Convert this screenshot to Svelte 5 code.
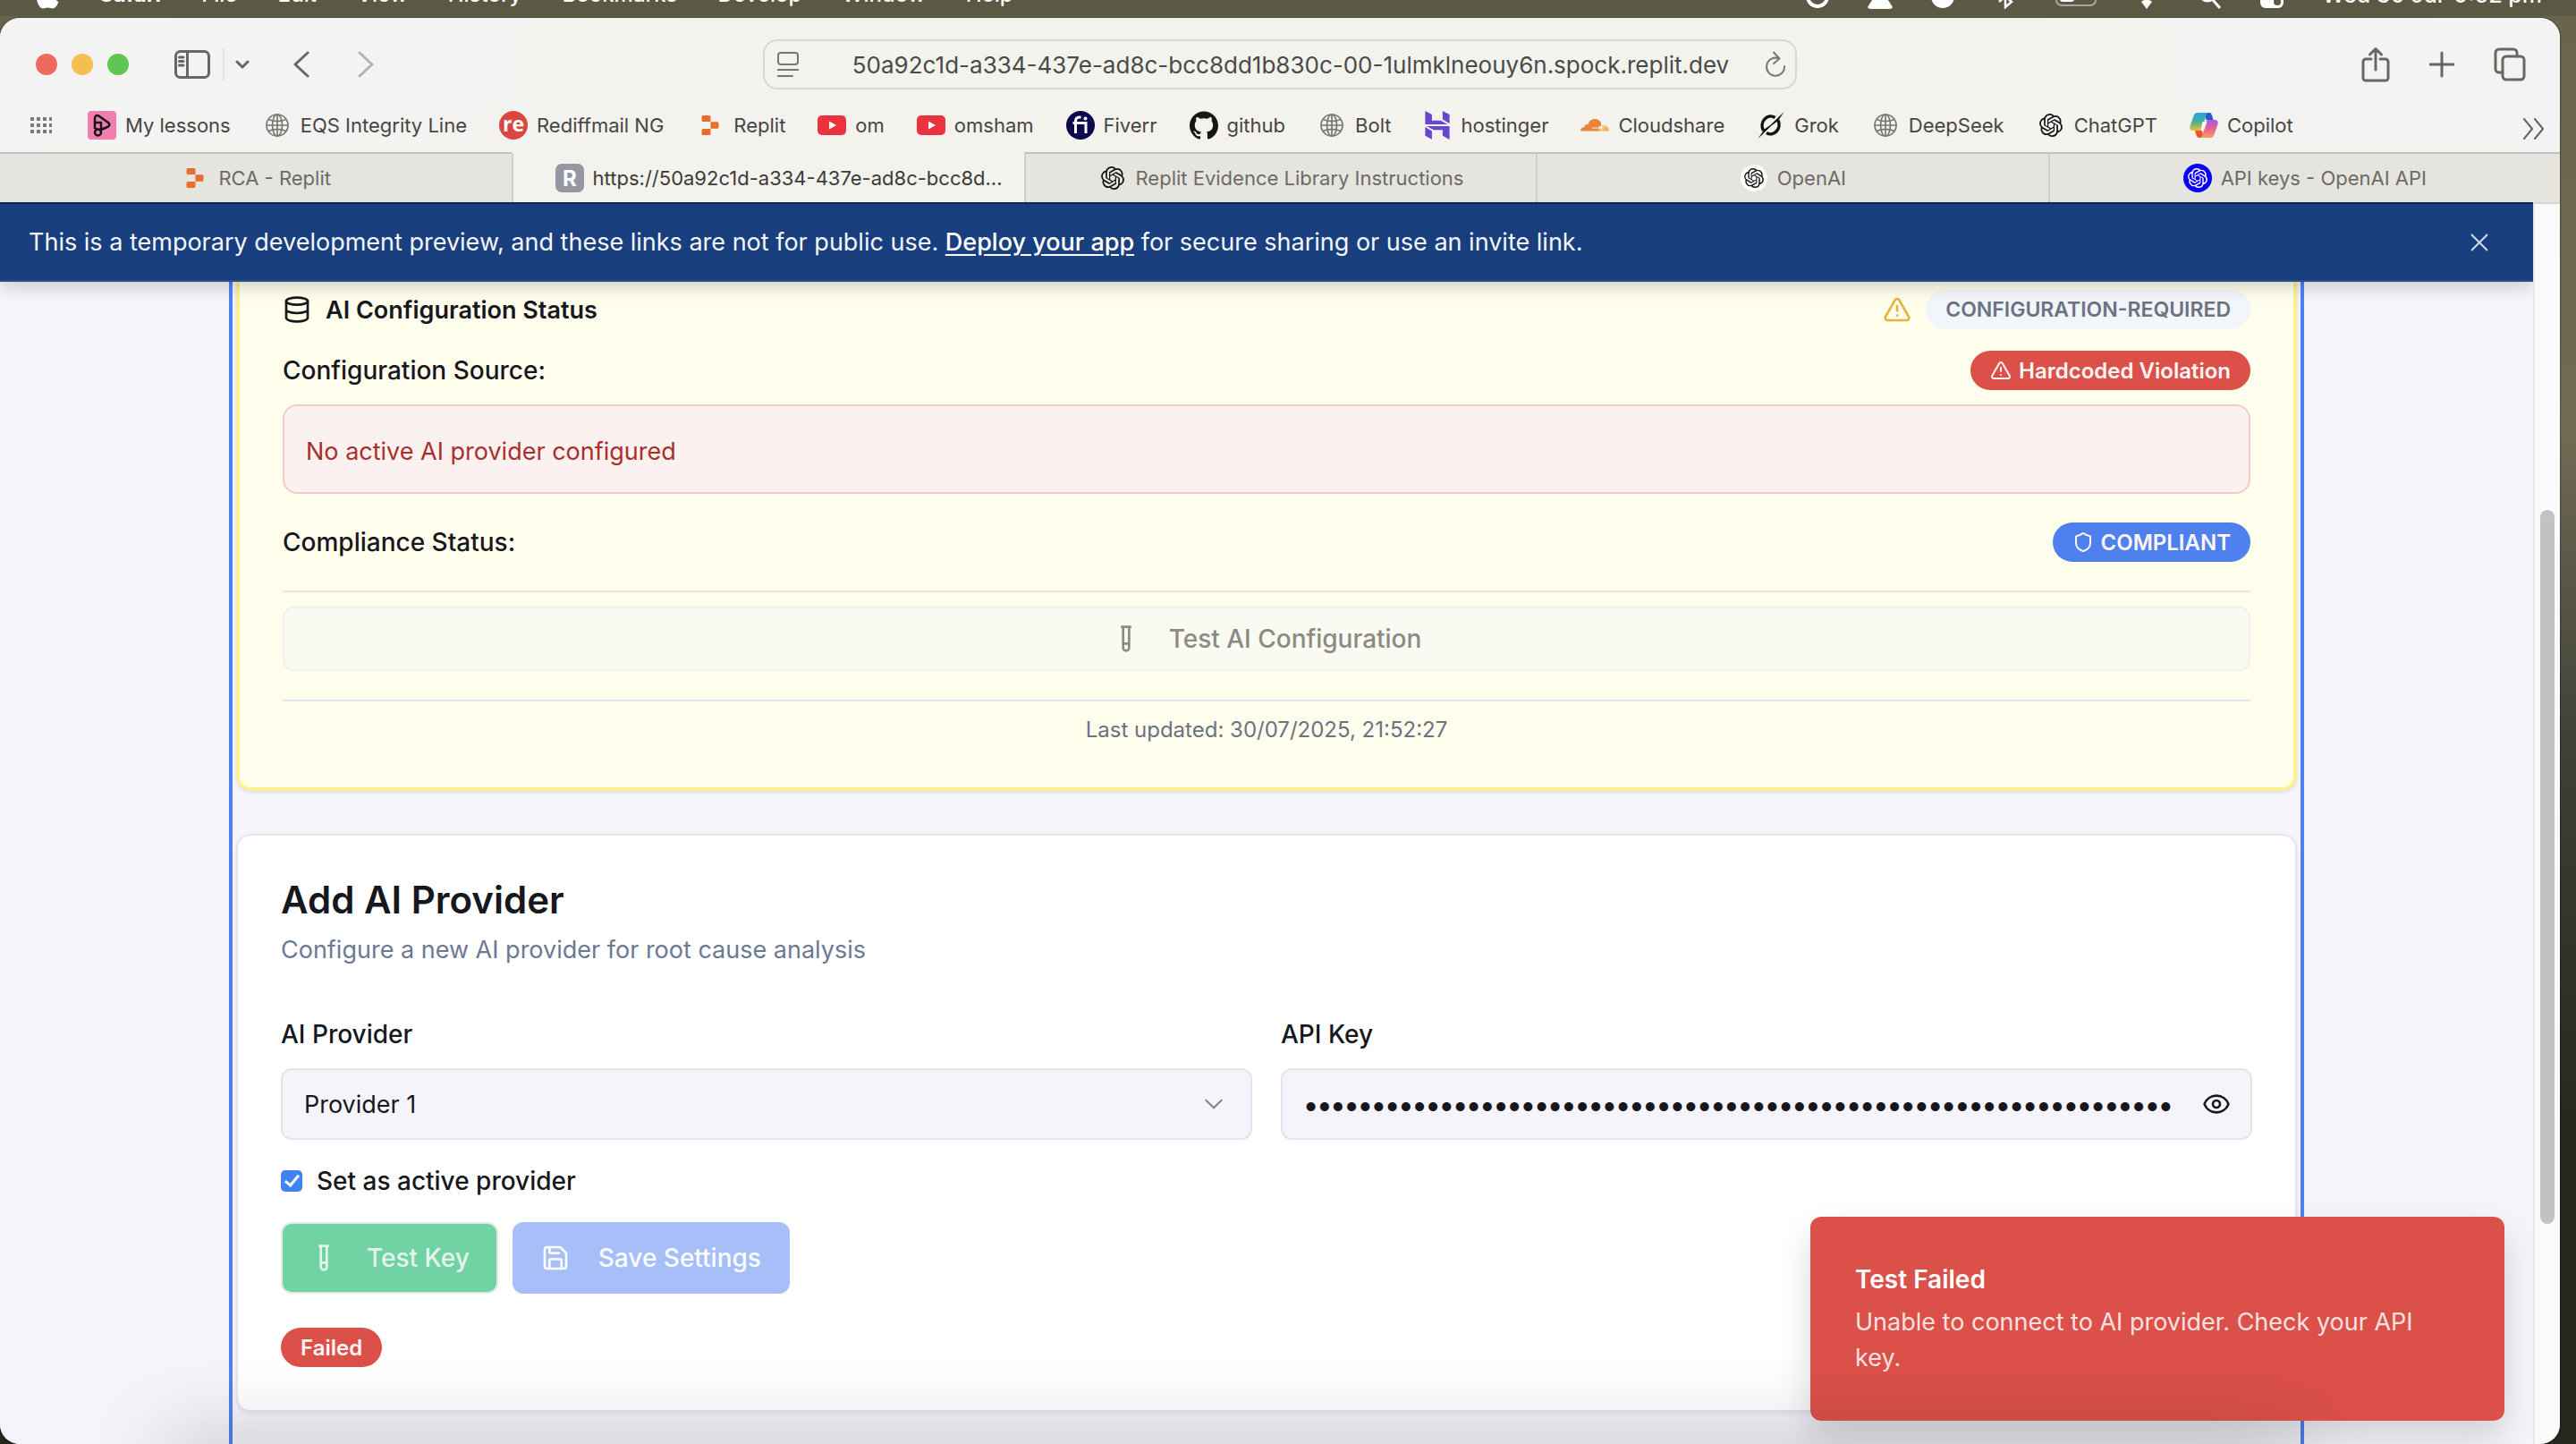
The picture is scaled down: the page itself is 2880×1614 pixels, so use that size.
<script>
  const menus = ['File', 'Edit', 'View', 'History', 'Bookmarks', 'Develop', 'Window', 'Help'];

  const bookmarks = [
    { icon: 'lessons', label: 'My lessons' },
    { icon: 'globe', label: 'EQS Integrity Line' },
    { icon: 'rediff', label: 'Rediffmail NG' },
    { icon: 'replit', label: 'Replit' },
    { icon: 'youtube', label: 'om' },
    { icon: 'youtube', label: 'omsham' },
    { icon: 'fiverr', label: 'Fiverr' },
    { icon: 'github', label: 'github' },
    { icon: 'globe', label: 'Bolt' },
    { icon: 'hostinger', label: 'hostinger' },
    { icon: 'cloud', label: 'Cloudshare' },
    { icon: 'grok', label: 'Grok' },
    { icon: 'globe', label: 'DeepSeek' },
    { icon: 'openai', label: 'ChatGPT' },
    { icon: 'copilot', label: 'Copilot' }
  ];

  const tabs = [
    { icon: 'replit', label: 'RCA - Replit' },
    { icon: 'letter', label: 'https://50a92c1d-a334-437e-ad8c-bcc8d...', active: true },
    { icon: 'openai', label: 'Replit Evidence Library Instructions' },
    { icon: 'openaiWhite', label: 'OpenAI' },
    { icon: 'openaiBlue', label: 'API keys - OpenAI API' }
  ];

  const knot =
    'M22.2819 9.8211a5.9847 5.9847 0 0 0-.5157-4.9108 6.0462 6.0462 0 0 0-6.5098-2.9A6.0651 6.0651 0 0 0 4.9807 4.1818a5.9847 5.9847 0 0 0-3.9977 2.9 6.0462 6.0462 0 0 0 .7427 7.0966 5.98 5.98 0 0 0 .511 4.9107 6.051 6.051 0 0 0 6.5146 2.9001A5.9847 5.9847 0 0 0 13.2599 24a6.0557 6.0557 0 0 0 5.7718-4.2058 5.9894 5.9894 0 0 0 3.9977-2.9001 6.0557 6.0557 0 0 0-.7475-7.0729zm-9.022 12.6081a4.4755 4.4755 0 0 1-2.8764-1.0408l.1419-.0804 4.7783-2.7582a.7948.7948 0 0 0 .3927-.6813v-6.7369l2.02 1.1686a.071.071 0 0 1 .038.052v5.5826a4.504 4.504 0 0 1-4.4945 4.4944zm-9.6607-4.1254a4.4708 4.4708 0 0 1-.5346-3.0137l.142.0852 4.783 2.7582a.7712.7712 0 0 0 .7806 0l5.8428-3.3685v2.3324a.0804.0804 0 0 1-.0332.0615L9.74 19.9502a4.4992 4.4992 0 0 1-6.1408-1.6464zM2.3408 7.8956a4.485 4.485 0 0 1 2.3655-1.9728V11.6a.7664.7664 0 0 0 .3879.6765l5.8144 3.3543-2.0201 1.1685a.0757.0757 0 0 1-.071 0l-4.8303-2.7865A4.504 4.504 0 0 1 2.3408 7.872zm16.5963 3.8558L13.1038 8.364 15.1192 7.2a.0757.0757 0 0 1 .071 0l4.8303 2.7913a4.4944 4.4944 0 0 1-.6765 8.1042v-5.6772a.79.79 0 0 0-.407-.667zm2.0107-3.0231l-.142-.0852-4.7735-2.7818a.7759.7759 0 0 0-.7854 0L9.409 9.2297V6.8974a.0662.0662 0 0 1 .0284-.0615l4.8303-2.7866a4.4992 4.4992 0 0 1 6.6802 4.66zM8.3065 12.863l-2.02-1.1638a.0804.0804 0 0 1-.038-.0567V6.0742a4.4992 4.4992 0 0 1 7.3757-3.4537l-.142.0805L8.704 5.459a.7948.7948 0 0 0-.3927.6813zm1.0976-2.3654l2.602-1.4998 2.6069 1.4998v2.9994l-2.5974 1.4997-2.6067-1.4997Z';

  let apiKey = $state('x'.repeat(64));
  let provider = $state('Provider 1');
  let active = $state(true);
  let reveal = $state(false);
</script>

{#snippet siteIcon(name)}
  <svg class="site" viewBox="0 0 32 32" aria-hidden="true">
    {#if name === 'lessons'}
      <rect width="32" height="32" rx="4" fill="#f07fae" />
      <path d="M8 20V8c0-3 3-4 5-2l10 7c2 2 2 4-1 5l-7 3M8 13h7v8M8 20l7 1M8 24a3.500 3.500 0 1 0 7 0 3.500 3.500 0 1 0-7 0" fill="none" stroke="#16121c" stroke-width="2.500" stroke-linejoin="round" />
    {:else if name === 'globe'}
      <g fill="none" stroke="#777773" stroke-width="1.700">
        <circle cx="16" cy="16" r="12" />
        <ellipse cx="16" cy="16" rx="5.500" ry="12" />
        <path d="M16 4v24M4 16h24M6 9.500c6 2.500 14 2.500 20 0M6 22.500c6-2.500 14-2.500 20 0" />
      </g>
    {:else if name === 'rediff'}
      <circle cx="16" cy="16" r="16" fill="#dc4640" />
      <text x="16" y="23" text-anchor="middle" class="rediff">re</text>
    {:else if name === 'replit'}
      <path d="M8 5h7a1.500 1.500 0 0 1 1.500 1.500V12H8a1.500 1.500 0 0 1-1.500-1.500v-4A1.500 1.500 0 0 1 8 5zM16.500 12.200h7.500a1.500 1.500 0 0 1 1.500 1.500v4.600a1.500 1.500 0 0 1-1.500 1.500h-7.500zM8 20h8.500v5.500A1.500 1.500 0 0 1 15 27H8a1.500 1.500 0 0 1-1.500-1.500v-4A1.500 1.500 0 0 1 8 20z" fill="#e66f2e" />
    {:else if name === 'youtube'}
      <rect y="5" width="32" height="22" rx="5" fill="#eb3340" />
      <path d="M13 11.500v9l8-4.500z" fill="#fff" />
    {:else if name === 'fiverr'}
      <circle cx="16" cy="16" r="16" fill="#0d084d" />
      <path d="M10.500 25V11.500c0-3 1.500-4.500 4.500-4.500h1.500M7.500 13.500H22V25" fill="none" stroke="#fff" stroke-width="3" />
      <circle cx="21.500" cy="8.500" r="2" fill="#fff" />
    {:else if name === 'github'}
      <path transform="scale(1.333)" fill="#161616" d="M12 .297c-6.630 0-12 5.373-12 12 0 5.303 3.438 9.800 8.205 11.385.6.113.82-.258.82-.577 0-.285-.01-1.040-.015-2.040-3.338.724-4.042-1.610-4.042-1.610C4.422 18.070 3.633 17.700 3.633 17.700c-1.087-.744.084-.729.084-.729 1.205.084 1.838 1.236 1.838 1.236 1.070 1.835 2.809 1.305 3.495.998.108-.776.417-1.305.76-1.605-2.665-.3-5.466-1.332-5.466-5.930 0-1.310.465-2.380 1.235-3.220-.135-.303-.54-1.523.105-3.176 0 0 1.005-.322 3.300 1.230.96-.267 1.980-.399 3-.405 1.020.006 2.040.138 3 .405 2.280-1.552 3.285-1.230 3.285-1.230.645 1.653.24 2.873.12 3.176.765.84 1.230 1.910 1.230 3.220 0 4.610-2.805 5.625-5.475 5.920.42.36.81 1.096.81 2.220 0 1.606-.015 2.896-.015 3.286 0 .315.21.69.825.57C20.565 22.092 24 17.592 24 12.297c0-6.627-5.373-12-12-12" />
    {:else if name === 'hostinger'}
      <path transform="scale(1.333)" fill="#6847d0" d="M16.415 0v7.160l5.785 3.384V2.949L16.415 0ZM1.800 0v11.237h18.815L14.890 8.090l-7.457-.003V3.024L1.800 0Zm14.615 20.894v-5.019l-7.514-.005c.007.033-5.820-3.197-5.820-3.197l19.119.091V24l-5.785-3.106ZM1.800 13.551v7.343l5.633 2.949v-6.988L1.800 13.551Z" />
    {:else if name === 'cloud'}
      <path d="M0 22.500c0-3 2-4.500 4.500-4.500 0-2.500 2-3.500 4-3 1-4 4-6 7.500-6 4 0 7 2.500 7.500 6.500L22 22.500z" fill="#ea8639" />
      <path d="M19 22.500c1-3 2-5 5.500-6.500 4 0 7.500 2 7.500 6.500z" fill="#f3b35c" />
      <path d="M13 19h10M23.500 14v8M20 18h7" stroke="#f3f2ec" stroke-width="1.200" />
    {:else if name === 'grok'}
      <path d="M20.500 7.500a9.500 10.500 0 0 0-13 14.500M24 10.500a9.500 10.500 0 0 1-13 14" fill="none" stroke="#111" stroke-width="3.500" />
      <path d="M30.500 1 9.500 21.500 24 11zM1.500 31 22 11 8.500 20.500z" fill="#111" />
    {:else if name === 'openai'}
      <path d={knot} transform="translate(3 3) scale(1.083)" fill="#141414" />
    {:else if name === 'openaiWhite'}
      <circle cx="16" cy="16" r="15" fill="#fff" />
      <path d={knot} transform="translate(5 5) scale(.917)" fill="#141414" />
    {:else if name === 'openaiBlue'}
      <circle cx="16" cy="16" r="16" fill="#0a00f5" />
      <path d={knot} transform="translate(5 5) scale(.917)" fill="#fff" />
    {:else if name === 'letter'}
      <rect width="32" height="32" rx="7" fill="#9697a2" />
      <text x="16" y="25" text-anchor="middle" class="letter">R</text>
    {:else if name === 'copilot'}
      <defs>
        <linearGradient id="cop-a" x1="0" y1="0" x2="0" y2="1">
          <stop offset="0" stop-color="#2f9fe8" />
          <stop offset=".5" stop-color="#3fb39a" />
          <stop offset="1" stop-color="#f0bf2b" />
        </linearGradient>
        <linearGradient id="cop-b" x1="0" y1="0" x2="0" y2="1">
          <stop offset="0" stop-color="#a05be8" />
          <stop offset=".5" stop-color="#e9628f" />
          <stop offset="1" stop-color="#f5a05a" />
        </linearGradient>
      </defs>
      <path d="M17 2h5c2 0 2.500 1.500 3 3l1.500 5h-5c-2 0-3 .5-3.500-1.500z" fill="#2459c9" />
      <path d="M15 30h-4c-2 0-3-1.500-3.500-3L6 22h5c2 0 3 0 3.500 2z" fill="#e8552f" />
      <path d="M9 2h13c-2 0-3 1.500-3.500 3L14 20c-.5 1.500-1.500 2-3 2H4c-3 0-4.500-2-3.500-5L4.500 5.500C5.300 3 6.500 2 9 2z" fill="url(#cop-a)" />
      <path d="M23 30H11c2 0 3-1.500 3.500-3L18 12.500c.5-1.500 1.500-2.500 3-2.500h7c3 0 4.500 2 3.500 5l-4 11.500C26.700 29 25.500 30 23 30z" fill="url(#cop-b)" />
      <path d="M14.500 12h5L16.500 21h-4z" fill="#f6f4f2" />
    {/if}
  </svg>
{/snippet}

{#snippet alertIcon()}
  <svg viewBox="0 0 24 24" class="line" aria-hidden="true">
    <path d="m21.730 18-8-14a2 2 0 0 0-3.480 0l-8 14A2 2 0 0 0 4 21h16a2 2 0 0 0 1.730-3M12 9v4M12 17h.01" />
  </svg>
{/snippet}

{#snippet tubeIcon()}
  <svg viewBox="0 0 24 24" class="line" aria-hidden="true">
    <path d="M14.500 2v17.500a2.500 2.500 0 0 1-5 0V2M8.500 2h7M14.500 16h-5" />
  </svg>
{/snippet}

<div class="desktop">
  <nav class="menubar" aria-label="Menu bar">
    <svg class="apple" viewBox="0 0 26 30" aria-hidden="true">
      <path d="M18 1c0 3-2 5.500-5 6 0-3 2-5.500 5-6zM13 9c1.500 0 3-1.500 6-1.500 2 0 4 1 5.500 3-5 3-4 9.500 1 11.500C24 26 21.500 29.500 19 29.500c-2 0-3-1-5.500-1s-3.500 1-5.500 1C4.500 29.500 1 23 1 17.500 1 11.500 4.500 8 8.500 8c2 0 3.500 1 4.500 1z" />
    </svg>
    <b>Safari</b>
    {#each menus as m}<span>{m}</span>{/each}
    <div class="tray">
      <svg viewBox="0 0 28 28"><circle cx="14" cy="14" r="11" fill="none" stroke="#fff" stroke-width="4" /></svg>
      <svg viewBox="0 0 28 28"><path d="M14 4l14 22q-1 2-3 2H3q-2 0-3-2z" /></svg>
      <svg viewBox="0 0 28 28"><circle cx="14" cy="14" r="13" /></svg>
      <svg viewBox="0 0 28 28"><path d="M7 8l14 12-7 6V2l7 6L7 20" fill="none" stroke="#fff" stroke-width="2.500" /></svg>
      <svg class="wide" viewBox="0 0 46 28"><rect x="1" y="4" width="44" height="20" rx="6" fill="none" stroke="#aaa89c" stroke-width="2" /><rect x="5" y="8" width="16" height="12" rx="3" /></svg>
      <svg viewBox="0 0 28 28"><path d="M14 28l-6-8q6-5 12 0z" /></svg>
      <svg viewBox="0 0 28 28"><path d="M18 18l8 9" stroke="#fff" stroke-width="3" /><circle cx="12" cy="11" r="8" fill="none" stroke="#fff" stroke-width="3" /></svg>
      <svg viewBox="0 0 28 28"><rect x="1" y="12" width="26" height="15" rx="6" /><circle cx="20" cy="20" r="4" fill="#5b5843" /></svg>
      <span class="clock">Wed 30 Jul&ensp;9:52 pm</span>
    </div>
  </nav>

  <div class="window">
    <header class="toolbar">
      <div class="side">
        <div class="lights"><i class="red"></i><i class="amber"></i><i class="green"></i></div>
        <button class="plain sidebar" aria-label="Show sidebar">
          <svg width="40" height="32" viewBox="0 0 40 32"><rect x="1.500" y="1.500" width="37" height="29" rx="5" /><path d="M14.500 1.500v29M5.500 8h4.500M5.500 12.500h4.500M5.500 17h4.500" /></svg>
        </button>
        <span class="split"></span>
        <button class="plain chev" aria-label="Tab groups">
          <svg width="16" height="10" viewBox="0 0 16 10"><path d="M2 2l6 6 6-6" /></svg>
        </button>
        <button class="plain back" aria-label="Back">
          <svg width="20" height="30" viewBox="0 0 20 30"><path d="M17 2L3 15l14 13" /></svg>
        </button>
        <button class="plain forward" aria-label="Forward" disabled>
          <svg width="20" height="30" viewBox="0 0 20 30"><path d="M3 2l14 13L3 28" /></svg>
        </button>
      </div>
      <div class="address">
        <svg width="24" height="30" viewBox="0 0 24 30"><rect x="1" y="2" width="22" height="13" rx="3" /><path d="M0 21h24M0 28h17" /></svg>
        <input aria-label="Address" value="50a92c1d-a334-437e-ad8c-bcc8dd1b830c-00-1ulmklneouy6n.spock.replit.dev" />
        <button class="plain" aria-label="Reload">
          <svg width="24" height="30" viewBox="0 0 24 30"><path d="M16 8.500A10 10 0 1 0 22 17M10 1.500l6.500 7L10 14" /></svg>
        </button>
      </div>
      <div class="side end">
        <button class="plain" aria-label="Share">
          <svg width="32" height="40" viewBox="0 0 32 40"><path d="M11 14H5a3 3 0 0 0-3 3v18a3 3 0 0 0 3 3h22a3 3 0 0 0 3-3V17a3 3 0 0 0-3-3h-6M16 26V3M9.500 9L16 2.500 22.500 9" /></svg>
        </button>
        <button class="plain" aria-label="New tab">
          <svg width="28" height="40" viewBox="0 0 28 40"><path d="M1 20h26M14 7v26" /></svg>
        </button>
        <button class="plain" aria-label="Tab overview">
          <svg width="36" height="40" viewBox="0 0 36 40"><rect x="10" y="11" width="24" height="26" rx="4" /><path d="M10 29H6a4 4 0 0 1-4-4V7a4 4 0 0 1 4-4h16a4 4 0 0 1 4 4v4" /></svg>
        </button>
      </div>
    </header>

    <nav class="bookmarks" aria-label="Favourites">
      <svg class="dots" width="24" height="18" viewBox="0 0 24 18" aria-hidden="true">
        <path d="M0 2h24M0 9h24M0 16h24" />
      </svg>
      {#each bookmarks as b}
        <a href="#{b.label}">{@render siteIcon(b.icon)}<span>{b.label}</span></a>
      {/each}
      <button class="plain more" aria-label="More favourites">
        <svg width="26" height="24" viewBox="0 0 26 24"><path d="M2 1l9 11-9 11M14 1l9 11-9 11" /></svg>
      </button>
    </nav>

    <div class="tabs" role="tablist">
      {#each tabs as t}
        <button role="tab" class="tab" class:active={t.active} aria-selected={t.active ?? false}>
          {@render siteIcon(t.icon)}<span>{t.label}</span>
        </button>
      {/each}
    </div>

    <div class="view">
      <div class="page">
        <div class="banner">
          <p>This is a temporary development preview, and these links are not for public use. <a href="#deploy">Deploy your app</a> for secure sharing or use an invite link.</p>
          <button class="plain close" aria-label="Dismiss">
            <svg width="20" height="20" viewBox="0 0 20 20"><path d="M1 1l18 18M19 1L1 19" /></svg>
          </button>
        </div>

        <main class="content">
          <section class="card status">
            <div class="row">
              <h2>
                <svg viewBox="0 0 24 24" class="line" aria-hidden="true"><ellipse cx="12" cy="5" rx="9" ry="3" /><path d="M3 5v14a9 3 0 0 0 18 0V5M3 12a9 3 0 0 0 18 0" /></svg>
                AI Configuration Status
              </h2>
              <div class="flags">
                {@render alertIcon()}
                <span class="badge muted">CONFIGURATION-REQUIRED</span>
              </div>
            </div>
            <div class="row source">
              <span>Configuration Source:</span>
              <span class="badge danger">{@render alertIcon()}Hardcoded Violation</span>
            </div>
            <p class="alert">No active AI provider configured</p>
            <div class="row compliance">
              <span>Compliance Status:</span>
              <span class="badge info">
                <svg viewBox="0 0 24 24" class="line" aria-hidden="true"><path d="M20 13c0 5-3.500 7.500-7.660 8.950a1 1 0 0 1-.67-.01C7.500 20.500 4 18 4 13V6a1 1 0 0 1 1-1c2 0 4.500-1.200 6.240-2.720a1.170 1.170 0 0 1 1.520 0C14.510 3.810 17 5 19 5a1 1 0 0 1 1 1z" /></svg>COMPLIANT
              </span>
            </div>
            <div class="test">
              <button class="btn outline" disabled>{@render tubeIcon()}Test AI Configuration</button>
            </div>
            <p class="updated">Last updated: 30/07/2025, 21:52:27</p>
          </section>

          <section class="card add">
            <h1>Add AI Provider</h1>
            <p class="sub">Configure a new AI provider for root cause analysis</p>
            <div class="fields">
              <div class="field">
                <label for="provider">AI Provider</label>
                <div class="control">
                  <select id="provider" bind:value={provider}>
                    <option>Provider 1</option>
                    <option>Provider 2</option>
                  </select>
                  <svg class="line arrow" viewBox="0 0 24 24" aria-hidden="true"><path d="M4 8l8 8 8-8" /></svg>
                </div>
              </div>
              <div class="field">
                <label for="key">API Key</label>
                <div class="control key">
                  <input id="key" type={reveal ? 'text' : 'password'} bind:value={apiKey} />
                  <button class="plain eye" aria-label="Show key" onclick={() => (reveal = !reveal)}>
                    <svg class="line" viewBox="0 0 24 24"><path d="M2.062 12.348a1 1 0 0 1 0-.696 10.750 10.750 0 0 1 19.876 0 1 1 0 0 1 0 .696 10.750 10.750 0 0 1-19.876 0" /><circle cx="12" cy="12" r="3" /></svg>
                  </button>
                </div>
              </div>
            </div>
            <label class="check"><input type="checkbox" bind:checked={active} /><span>Set as active provider</span></label>
            <div class="actions">
              <button class="btn key-test" disabled>{@render tubeIcon()}Test Key</button>
              <button class="btn save" disabled>
                <svg viewBox="0 0 24 24" class="line" aria-hidden="true"><path d="M15.200 3a2 2 0 0 1 1.400.6l3.800 3.800a2 2 0 0 1 .6 1.400V19a2 2 0 0 1-2 2H5a2 2 0 0 1-2-2V5a2 2 0 0 1 2-2zM17 21v-7a1 1 0 0 0-1-1H8a1 1 0 0 0-1 1v7M7 3v4a1 1 0 0 0 1 1h7" /></svg>Save Settings
              </button>
            </div>
            <span class="badge danger">Failed</span>
          </section>
        </main>

        <div class="toast" role="alert">
          <strong>Test Failed</strong>
          <p>Unable to connect to AI provider. Check your API key.</p>
        </div>
        <div class="dock-shade"></div>
      </div>
      <div class="scroll"><div class="thumb"></div></div>
    </div>
  </div>
</div>

<style>
  :global(body) {
    margin: 0;
  }
  :global(*) {
    box-sizing: border-box;
  }
  .desktop {
    height: 100vh;
    display: flex;
    flex-direction: column;
    overflow: hidden;
    font-family: Inter, "Liberation Sans", sans-serif;
    font-size: 27px;
    color: #17181e;
    background: linear-gradient(#68644d, #716a54 30%, #3d4037 52%, #25261e 80%);
  }
  h1, h2, p {
    margin: 0;
  }
  button, input, select {
    font: inherit;
    color: inherit;
  }
  .plain {
    border: 0;
    padding: 0;
    background: none;
    display: flex;
    align-items: center;
  }
  svg {
    flex: none;
    display: block;
  }

  .menubar {
    height: 18px;
    flex: none;
    overflow: hidden;
    display: flex;
    align-items: flex-end;
    gap: 45px;
    padding: 0 38px 8px 40px;
    background: #5b5843;
    color: #fff;
    font-size: 24px;
    font-weight: 500;
    line-height: 32px;
    white-space: nowrap;
    margin-bottom: 2px;
  }
  .menubar svg {
    fill: #fff;
  }
  .apple {
    width: 26px;
    height: 30px;
  }
  .tray {
    margin-left: auto;
    display: flex;
    align-items: flex-end;
    gap: 42px;
  }
  .tray svg {
    width: 28px;
    height: 28px;
  }
  .tray .wide {
    width: 46px;
  }
  .clock {
    font-size: 25px;
  }

  .window {
    flex: 1;
    min-height: 0;
    margin-right: 18px;
    display: flex;
    flex-direction: column;
    background: #f3f3ee;
    border-radius: 22px;
    overflow: hidden;
    box-shadow: 0 0 2px #000;
  }
  .toolbar {
    height: 104px;
    flex: none;
    display: grid;
    grid-template-columns: 1fr minmax(400px, 1156px) 1fr;
    align-items: center;
    background: linear-gradient(90deg, #f3f3f3, #f2f3ed 40%, #f2f3ed 70%, #f3f3f3);
  }
  .toolbar svg, .more svg {
    fill: none;
    stroke: #666663;
    stroke-width: 3;
    stroke-linecap: round;
    stroke-linejoin: round;
  }
  .side {
    display: flex;
    align-items: center;
    padding-left: 40px;
  }
  .lights {
    display: flex;
    gap: 16px;
    margin-right: 51px;
  }
  .lights i {
    width: 24px;
    height: 24px;
    border-radius: 50%;
  }
  .red { background: #ed6a5f; }
  .amber { background: #f5bf4f; }
  .green { background: #61c554; }
  .split {
    width: 2px;
    height: 36px;
    margin: 0 12px 0 14px;
    background: #e3e3df;
  }
  .back {
    margin-left: 48px;
  }
  .forward {
    margin-left: 52px;
    opacity: 0.45;
  }
  .address {
    height: 56px;
    display: flex;
    align-items: center;
    padding: 0 10px 0 14px;
    border: 2px solid #d8d8d2;
    border-radius: 16px;
  }
  .address svg {
    stroke-width: 2;
    stroke: #777774;
  }
  .address input {
    flex: 1;
    min-width: 0;
    border: 0;
    padding: 0 0 0 20px;
    background: none;
    text-align: center;
    font-size: 26px;
    color: #4a4a48;
  }
  .end {
    justify-content: flex-end;
    gap: 44px;
    padding: 0 38px 0 0;
  }
  .bookmarks {
    height: 46px;
    flex: none;
    display: flex;
    align-items: flex-start;
    gap: 36px;
    padding: 0 16px 0 34px;
    font-size: 22px;
    line-height: 32px;
    color: #464644;
    background: linear-gradient(90deg, #f3f3f3, #f3f2ec 40%, #f3f2ec 70%, #f3f3f3);
    white-space: nowrap;
  }
  .bookmarks a {
    display: flex;
    gap: 10px;
    color: inherit;
    text-decoration: none;
  }
  .dots {
    margin: 7px 4px 0 0;
    stroke: #7a7a77;
    stroke-width: 4;
    stroke-dasharray: 4 3;
  }
  .site {
    width: 32px;
    height: 32px;
  }
  .rediff {
    font: 700 23px "Open Sans", sans-serif;
    fill: #fff;
  }
  .letter {
    font: 700 24px Inter, sans-serif;
    fill: #fff;
  }
  .more {
    margin: 8px 0 0 auto;
  }
  .more svg {
    stroke-width: 2;
  }
  .tabs {
    height: 56px;
    flex: none;
    display: grid;
    grid-template-columns: repeat(5, 1fr);
    font-size: 22px;
  }
  .tab {
    min-width: 0;
    display: flex;
    align-items: center;
    justify-content: center;
    gap: 10px;
    border: 0;
    border-left: 2px solid #cfcec9;
    border-top: 2px solid #c3c2bd;
    padding: 0 24px;
    background: #e5e4df;
    color: #6b6b67;
    white-space: nowrap;
  }
  .tab:first-child {
    border-left: 0;
  }
  .tab.active {
    padding-left: 46px;
    background: #f3f2ec;
    border-top-color: #f3f2ec;
    color: #3b3b39;
  }
  .tab.active span {
    overflow: hidden;
    text-overflow: ellipsis;
  }

  .view {
    flex: 1;
    min-height: 0;
    display: flex;
  }
  .page {
    flex: 1;
    min-width: 0;
    position: relative;
    overflow: hidden;
    background: #f5f4fa;
    display: flex;
    flex-direction: column;
  }
  .banner {
    position: relative;
    z-index: 1;
    flex: none;
    min-height: 89px;
    display: flex;
    align-items: center;
    justify-content: space-between;
    padding: 0 50px 0 32px;
    background: #193f7e;
    border-top: 2px solid #0a2567;
    border-bottom: 2px solid #2c4e87;
    color: #f4f6fa;
    box-shadow: 0 4px 20px rgba(0, 0, 0, 0.2);
  }
  .banner a {
    color: #fff;
    font-weight: 500;
    text-underline-offset: 4px;
  }
  .close svg {
    fill: none;
    stroke: #d5ddea;
    stroke-width: 2;
  }
  .content {
    flex: 1 0 auto;
    width: calc(100% - 64px);
    max-width: 2320px;
    margin: 0 auto;
    padding: 0 4px 64px;
    border: solid #4f81ee;
    border-width: 0 4px;
    display: flex;
    flex-direction: column;
    gap: 48px;
  }
  .card {
    background: #fff;
    border: 2px solid #e1e7ee;
    border-radius: 16px;
    padding: 48px;
    box-shadow: 0 2px 4px rgba(0, 0, 0, 0.08);
  }
  .card.status {
    background: #fffdeb;
    border: solid #fcf08f;
    border-width: 0 4px 4px;
    border-radius: 0 0 16px 16px;
    padding-top: 9px;
  }
  .line {
    width: 32px;
    height: 32px;
    fill: none;
    stroke: currentColor;
    stroke-width: 2;
    stroke-linecap: round;
    stroke-linejoin: round;
  }
  .row {
    display: flex;
    align-items: center;
    justify-content: space-between;
    font-size: 28px;
    font-weight: 500;
  }
  h2 {
    display: flex;
    align-items: center;
    gap: 16px;
    font-size: 27px;
    font-weight: 600;
  }
  .flags {
    display: flex;
    align-items: center;
    gap: 16px;
    color: #e4b43c;
  }
  .badge {
    display: inline-flex;
    align-items: center;
    gap: 8px;
    height: 44px;
    padding: 0 22px;
    border-radius: 22px;
    font-size: 24px;
    font-weight: 600;
    color: #fdf6f5;
    white-space: nowrap;
  }
  .badge .line {
    width: 24px;
    height: 24px;
  }
  .muted {
    background: #f2f5fa;
    color: #6c7282;
    font-size: 23px;
  }
  .danger {
    background: #db5049;
  }
  .info {
    background: #4f81ee;
  }
  .source {
    margin: 24px 0 16px;
  }
  .alert {
    height: 100px;
    display: flex;
    align-items: center;
    padding: 4px 24px 0;
    border: 2px solid #f5c9c8;
    border-radius: 16px;
    background: #fcf1f1;
    color: #aa2f29;
  }
  .compliance {
    margin: 32px 0;
  }
  .test {
    padding: 16px 0 32px;
    border: solid #e1e7ee;
    border-width: 2px 0;
  }
  .btn {
    height: 80px;
    display: flex;
    align-items: center;
    justify-content: center;
    gap: 32px;
    border: 0;
    border-radius: 12px;
    font-size: 28px;
    font-weight: 500;
  }
  .btn.outline {
    width: 100%;
    height: 72px;
    border: 2px solid #f0f2ec;
    background: #fafaf2;
    color: #8b8b83;
  }
  .updated {
    padding-top: 16px;
    font-size: 24px;
    line-height: 32px;
    text-align: center;
    color: #6c7282;
  }
  h1 {
    font-size: 42px;
    line-height: 48px;
    font-weight: 600;
  }
  .sub {
    margin: 12px 0 60px;
    line-height: 40px;
    color: #6b7a92;
  }
  .fields {
    display: grid;
    grid-template-columns: 1fr 1fr;
    gap: 32px;
  }
  .field {
    display: flex;
    flex-direction: column;
    gap: 24px;
  }
  label {
    font-size: 28px;
    font-weight: 500;
    line-height: 28px;
  }
  .control {
    height: 80px;
    display: grid;
    align-items: center;
    border: 2px solid #e1e5ee;
    border-radius: 12px;
    background: #f5f4fa;
  }
  .control select {
    grid-area: 1 / 1;
    height: 76px;
    appearance: none;
    border: 0;
    background: none;
    padding: 0 24px;
  }
  .arrow {
    grid-area: 1 / 1;
    justify-self: end;
    width: 26px;
    height: 26px;
    margin-right: 28px;
    color: #85868d;
    pointer-events: none;
  }
  .key {
    grid-template-columns: 1fr auto;
    gap: 26px;
    padding: 0 22px 0 24px;
  }
  .key input {
    min-width: 0;
    height: 40px;
    border: 0;
    padding: 0;
    background: none;
    outline: 0;
    font-size: 32px;
    font-weight: 700;
  }
  .check {
    margin: 32px 0;
    display: flex;
    align-items: center;
    gap: 16px;
  }
  .check input {
    appearance: none;
    width: 24px;
    height: 24px;
    margin: 0;
    border-radius: 5px;
    background: #3f83f7;
    display: grid;
    place-items: center;
  }
  .check input:checked::before {
    content: "";
    width: 6px;
    height: 13px;
    margin-bottom: 4px;
    border: solid #fff;
    border-width: 0 3px 3px 0;
    transform: rotate(40deg);
  }
  .actions {
    display: flex;
    gap: 16px;
    margin-bottom: 38px;
  }
  .key-test {
    padding: 0 30px;
    border: 2px solid #dfe9ea;
    background: #71d3a3;
    color: #e3f4ec;
  }
  .save {
    padding: 0 32px;
    background: #a7bff8;
    color: #fbfcff;
  }
  .toast {
    position: absolute;
    right: 32px;
    bottom: 26px;
    width: 776px;
    padding: 50px;
    border-radius: 12px;
    background: #db5049;
    color: #fff;
    box-shadow: 0 20px 40px rgba(0, 0, 0, 0.15);
  }
  .toast strong {
    display: block;
    font-size: 28px;
    font-weight: 600;
    line-height: 40px;
    margin-bottom: 8px;
  }
  .toast p {
    line-height: 40px;
    color: #f9e1e0;
  }
  .dock-shade {
    position: absolute;
    left: 180px;
    right: 260px;
    bottom: -40px;
    height: 40px;
    border-radius: 40px;
    box-shadow: 0 0 90px rgba(0, 0, 0, 0.3);
    pointer-events: none;
  }
  .scroll {
    flex: none;
    width: 30px;
    padding: 342px 6px 0;
    background: #fafafa;
    border-left: 2px solid #e7e7e7;
    border-top: 2px solid #d5d5d2;
  }
  .thumb {
    width: 16px;
    height: 798px;
    border-radius: 8px;
    background: #c2c2c2;
  }
</style>
